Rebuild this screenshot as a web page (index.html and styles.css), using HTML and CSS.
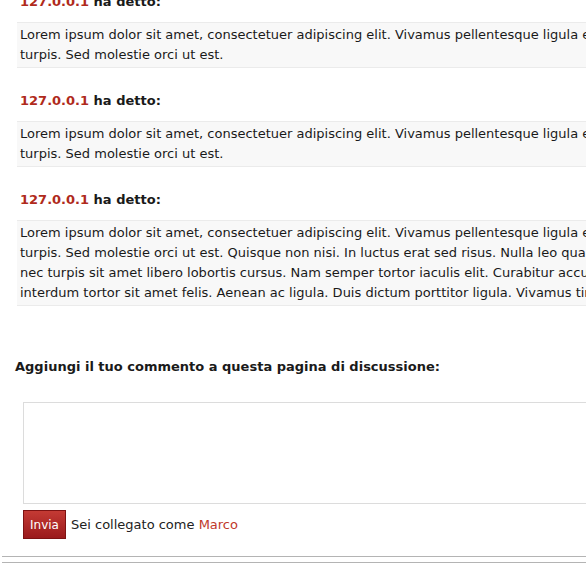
FILE: index.html
```html
<!DOCTYPE html>
<html lang="it">
<head>
<meta charset="utf-8">
<title>Discussione</title>
<link rel="stylesheet" href="styles.css">
</head>
<body>
<div class="page">
  <div class="comments">
    <div class="comment">
      <div class="who"><span class="ip">127.0.0.1</span> ha detto:</div>
      <div class="body">Lorem ipsum dolor sit amet, consectetuer adipiscing elit. Vivamus pellentesque ligula eget mauris<br>turpis. Sed molestie orci ut est.</div>
    </div>
    <div class="comment">
      <div class="who"><span class="ip">127.0.0.1</span> ha detto:</div>
      <div class="body">Lorem ipsum dolor sit amet, consectetuer adipiscing elit. Vivamus pellentesque ligula eget mauris<br>turpis. Sed molestie orci ut est.</div>
    </div>
    <div class="comment">
      <div class="who"><span class="ip">127.0.0.1</span> ha detto:</div>
      <div class="body">Lorem ipsum dolor sit amet, consectetuer adipiscing elit. Vivamus pellentesque ligula eget mauris<br>turpis. Sed molestie orci ut est. Quisque non nisi. In luctus erat sed risus. Nulla leo quam, gravida<br>nec turpis sit amet libero lobortis cursus. Nam semper tortor iaculis elit. Curabitur accumsan<br>interdum tortor sit amet felis. Aenean ac ligula. Duis dictum porttitor ligula. Vivamus tincidunt.</div>
    </div>
  </div>
  <div class="add">
    <div class="add-title">Aggiungi il tuo commento a questa pagina di discussione:</div>
    <div class="form">
      <textarea class="input"></textarea>
      <div class="actions">
        <button class="send" type="button">Invia</button>
        <span class="status">Sei collegato come <span class="user">Marco</span></span>
      </div>
    </div>
  </div>
  <div class="footer-rule"></div>
</div>
</body>
</html>
```

FILE: styles.css
```css
html, body {
  margin: 0;
  padding: 0;
  overflow: hidden;
  background: #fff;
}
body {
  font-family: "DejaVu Sans", Verdana, sans-serif;
  font-size: 13px;
  color: #1a1a1a;
}
.page {
  width: 900px;
}
.comments {
  margin-top: -8px;
  padding-left: 17px;
}
.comment {
  margin-bottom: 23px;
}
.who {
  font-weight: bold;
  line-height: 20px;
  padding-left: 3px;
  margin-bottom: 10px;
}
.ip {
  color: #b02a1c;
}
.body {
  background: #f8f8f8;
  border-top: 1px solid #ebebeb;
  border-bottom: 1px solid #ebebeb;
  padding: 2px 3px;
  line-height: 20px;
  white-space: nowrap;
}
.add {
  padding-top: 28px;
}
.add-title {
  font-weight: bold;
  line-height: 20px;
  padding-left: 15px;
}
.form {
  margin-top: 25px;
  padding-left: 23px;
}
.input {
  display: block;
  box-sizing: border-box;
  width: 860px;
  height: 102px;
  border: 1px solid #dcdcdc;
  margin: 0;
  padding: 0;
  resize: none;
  background: #fff;
}
.actions {
  display: flex;
  align-items: center;
  gap: 5px;
  margin-top: 6px;
}
.send {
  box-sizing: border-box;
  width: 43px;
  height: 29px;
  padding: 0;
  border: 1px solid #7d1212;
  background: linear-gradient(#c43a34, #9a1a1c);
  color: #fff;
  font-family: "DejaVu Sans", Verdana, sans-serif;
  font-size: 12px;
}
.status {
  color: #222;
}
.user {
  color: #c0392b;
}
.footer-rule {
  margin-top: 17px;
  height: 5px;
  border-top: 1px solid #b4b4b4;
  border-bottom: 1px solid #b4b4b4;
  margin-left: 2px;
}
```
